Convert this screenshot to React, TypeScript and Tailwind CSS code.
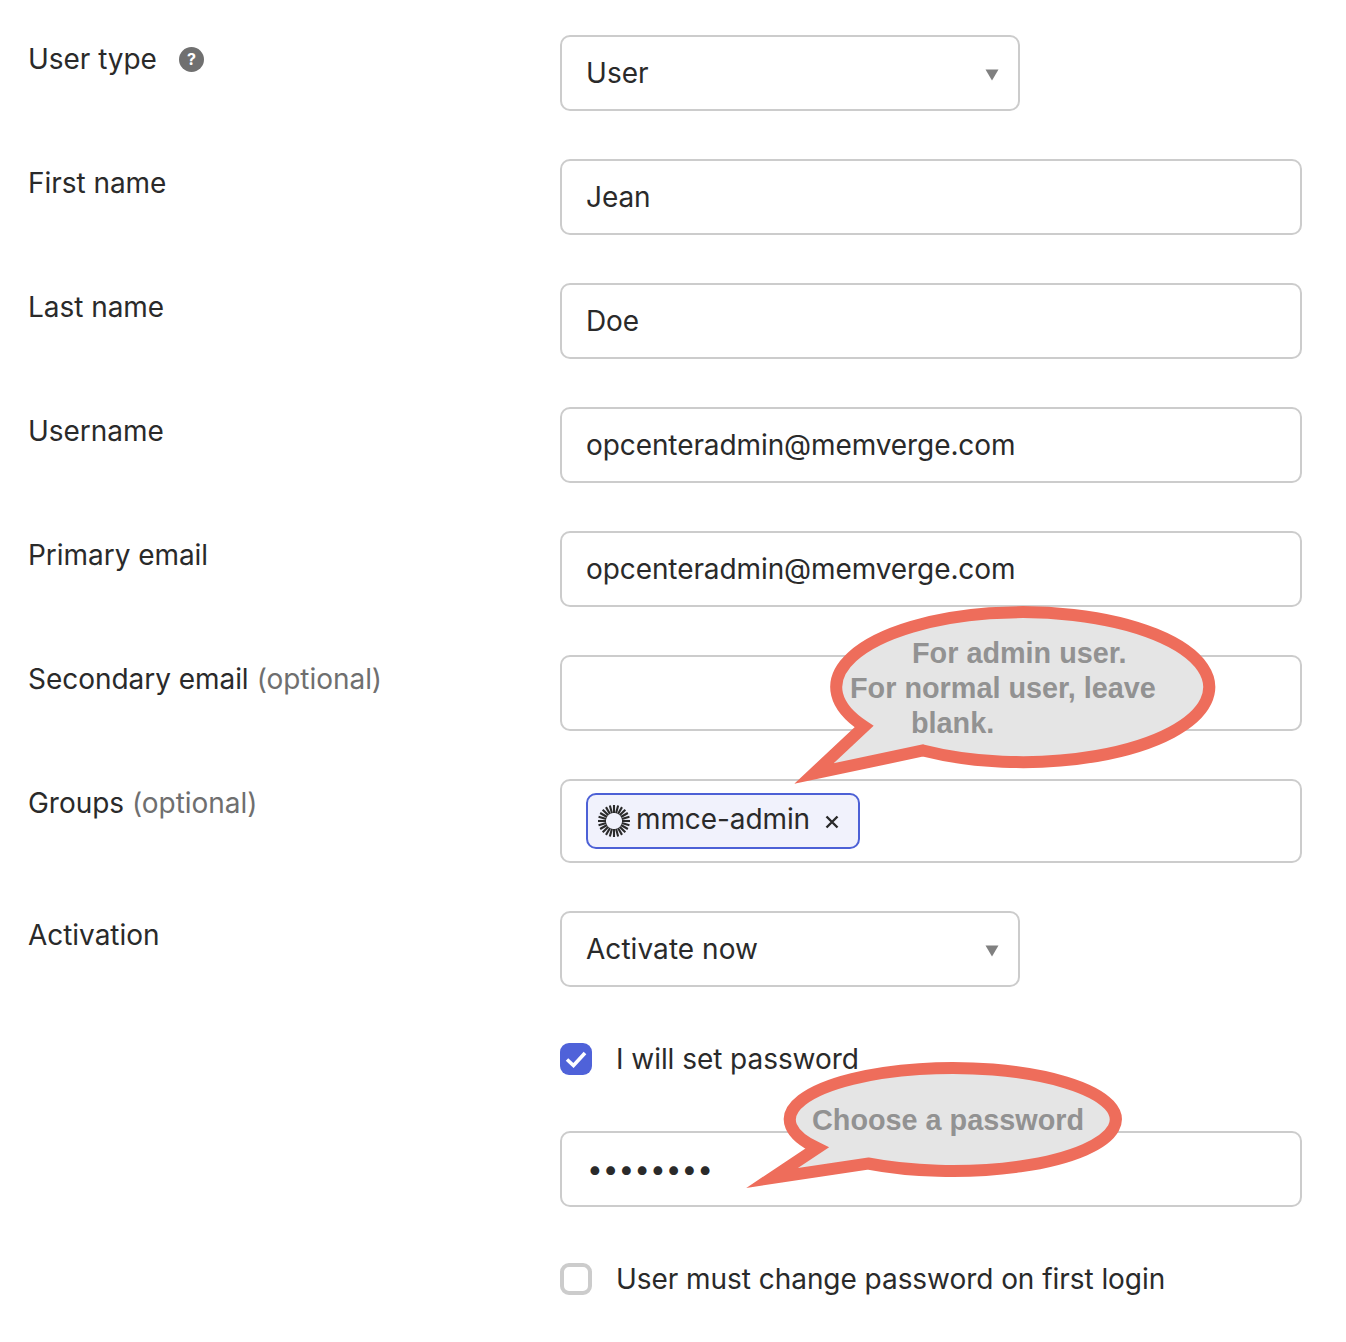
const font = "font-['Inter',sans-serif]";

function Caret() {
  return (
    <svg className="w-[14px] h-[12px] shrink-0 mt-[3px]" viewBox="0 0 14 12">
      <path d="M0.5 0.5H13.5L7 11.5Z" fill="#808080" />
    </svg>
  );
}

function Label({ text, optional, help }: { text: string; optional?: boolean; help?: boolean }) {
  return (
    <div className="w-[532px] shrink-0 flex items-center h-[48px] text-[28px] text-[#2a2a2a] tracking-[-0.04px]">
      <span>{text}</span>
      {optional && <span className="ml-[8px] text-[#6f6f6f]">(optional)</span>}
      {help && (
        <span className="ml-[22px] w-[25px] h-[25px] rounded-full bg-[#707070] text-white text-[16px] font-bold flex items-center justify-center">
          ?
        </span>
      )}
    </div>
  );
}

function Field({ value }: { value: string }) {
  return (
    <div className="w-[742px] h-[76px] bg-white border-2 border-[#cccccc] rounded-[10px] px-[24px] flex items-center text-[28px] text-[#2a2a2a] tracking-[-0.09px]">
      {value}
    </div>
  );
}

function Select({ value }: { value: string }) {
  return (
    <div className="w-[460px] h-[76px] bg-white border-2 border-[#cccccc] rounded-[10px] pl-[24px] pr-[19px] flex items-center justify-between text-[28px] text-[#2a2a2a] tracking-[0.05px]">
      <span>{value}</span>
      <Caret />
    </div>
  );
}

function Row({ label, optional, help, children }: { label: string; optional?: boolean; help?: boolean; children: React.ReactNode }) {
  return (
    <div className="flex items-start">
      <Label text={label} optional={optional} help={help} />
      {children}
    </div>
  );
}

function Spokes() {
  const spokes = Array.from({ length: 24 }, (_, i) => (i * 360) / 24);
  return (
    <svg className="w-[34px] h-[34px] shrink-0" viewBox="0 0 34 34">
      {spokes.map((a) => (
        <line key={a} x1="17" y1="1" x2="17" y2="9" stroke="#2a2a2a" strokeWidth="2.1" transform={`rotate(${a} 17 17)`} />
      ))}
    </svg>
  );
}

function Callouts() {
  return (
    <svg className="absolute left-0 top-0 w-[1346px] h-[1342px] pointer-events-none" viewBox="0 0 1346 1342">
      <path
        d="M923 750.5 A186.5 75 0 1 0 864 726.5 L814 773.5 L923 750.5 Z"
        fill="#e5e5e5"
        stroke="#ee6d5b"
        strokeWidth="12"
        strokeMiterlimit="10"
      />
      <path
        d="M868 1163.5 A163 51.5 0 1 0 817 1148 L772 1178 Z"
        fill="#e5e5e5"
        stroke="#ee6d5b"
        strokeWidth="12"
        strokeMiterlimit="10"
      />
      <g fill="#929292" fontFamily="'Liberation Sans', Arial, sans-serif" fontWeight="700" fontSize="28.8">
        <text x="912" y="663">For admin user.</text>
        <text x="850" y="698">For normal user, leave</text>
        <text x="911" y="733">blank.</text>
        <text x="812" y="1130">Choose a password</text>
      </g>
    </svg>
  );
}

export default function App() {
  return (
    <div className={`relative w-[1346px] h-[1342px] bg-white overflow-hidden pl-[28px] pt-[35px] ${font}`}>
      <div className="flex flex-col gap-[48px]">
        <Row label="User type" help>
          <Select value="User" />
        </Row>
        <Row label="First name">
          <Field value="Jean" />
        </Row>
        <Row label="Last name">
          <Field value="Doe" />
        </Row>
        <Row label="Username">
          <Field value="opcenteradmin@memverge.com" />
        </Row>
        <Row label="Primary email">
          <Field value="opcenteradmin@memverge.com" />
        </Row>
        <Row label="Secondary email" optional>
          <Field value="" />
        </Row>
        <Row label="Groups" optional>
          <div className="w-[742px] h-[84px] bg-white border-2 border-[#cccccc] rounded-[10px] px-[24px] flex items-center">
            <div className="w-[274px] h-[56px] bg-[#f1f2fc] border-2 border-[#4d61d6] rounded-[10px] pl-[9px] flex items-center text-[28px] text-[#2a2a2a] tracking-[-0.09px]">
              <Spokes />
              <span className="ml-[5px] -mt-[4px]">mmce-admin</span>
              <span className="ml-[15px] mt-[1px]">
                <svg className="w-[14px] h-[14px]" viewBox="0 0 14 14">
                  <path d="M1.5 1.5L12.5 12.5M12.5 1.5L1.5 12.5" stroke="#2a2a2a" strokeWidth="2.4" fill="none" />
                </svg>
              </span>
            </div>
          </div>
        </Row>
        <Row label="Activation">
          <Select value="Activate now" />
        </Row>
      </div>

      <div className="ml-[532px] mt-[56px] flex items-center h-[32px] text-[28px] text-[#2a2a2a] tracking-[-0.05px]">
        <span className="w-[32px] h-[32px] rounded-[9px] bg-[#4f62d9] flex items-center justify-center shrink-0">
          <svg className="w-[22px] h-[18px]" viewBox="0 0 22 18">
            <path d="M2 9.5L8.5 15.5L20 3" stroke="white" strokeWidth="3.6" fill="none" />
          </svg>
        </span>
        <span className="ml-[24px]">I will set password</span>
      </div>

      <div className="ml-[532px] mt-[56px]">
        <div className="w-[742px] h-[76px] bg-white border-2 border-[#cccccc] rounded-[10px] px-[25px] flex items-center text-[28px] text-[#2a2a2a] tracking-[0px]">
          ••••••••
        </div>
      </div>

      <div className="ml-[532px] mt-[56px] flex items-center h-[32px] text-[28px] text-[#2a2a2a] tracking-[-0.05px]">
        <span className="w-[32px] h-[32px] rounded-[9px] border-[4px] border-[#cccccc] bg-white shrink-0" />
        <span className="ml-[24px]">User must change password on first login</span>
      </div>

      <Callouts />
    </div>
  );
}
